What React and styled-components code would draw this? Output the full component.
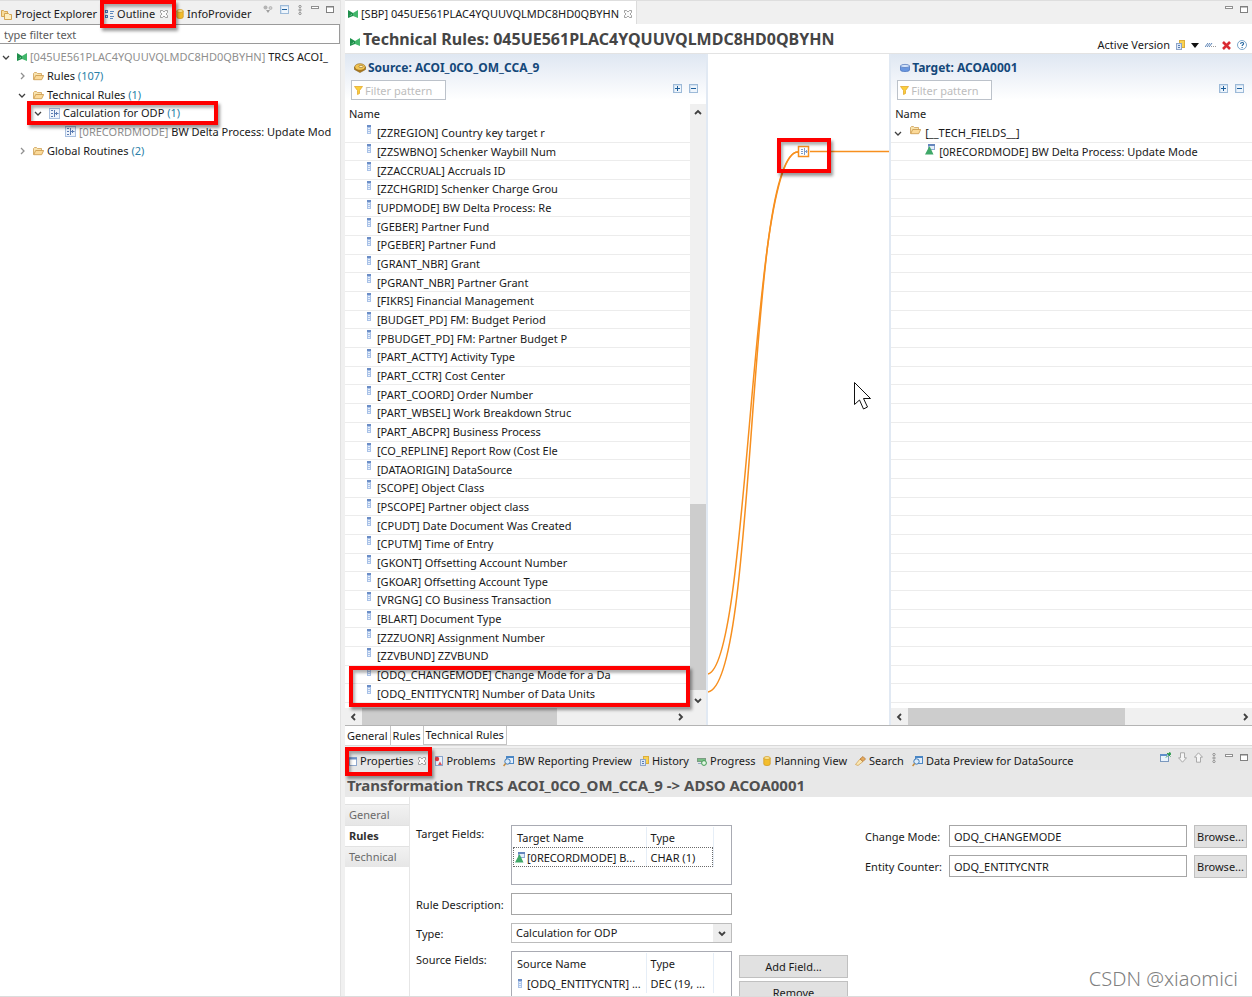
import React from 'react';
import styled, { createGlobalStyle, css } from 'styled-components';

const GlobalStyle = createGlobalStyle`
    * {
        box-sizing: border-box;
    }
    body {
        margin: 0;
        background: #f0f0f0;
        color: #1a1a1a;
        font-family: "Noto Sans", "Open Sans", sans-serif;
        font-size: 11px;
        line-height: 16px;
    }
    button, input, select, table {
        font: inherit;
        color: inherit;
    }
    svg {
        display: block;
        flex: none;
    }
    h1, h2, p, ul {
        margin: 0;
        padding: 0;
    }
`;

/* ---------- icons ---------- */

const TransformIcon = () => (
    <svg width="10" height="10" viewBox="0 0 10 10">
        <path d="M0 1l5 3v3L0 9z" fill="#1f8f4c" />
        <path d="M10 1L5 4v3l5 2z" fill="#43b76c" />
        <path d="M1 7l3-2v1z" fill="#9be0b4" />
    </svg>
);

const FolderIcon = () => (
    <svg width="11" height="10" viewBox="0 0 11 10">
        <path d="M.5 8.500v-6l1-1h2l1 1h4v2" fill="#f8e3ae" stroke="#cf9f55" strokeWidth=".8" />
        <path d="M.7 8.700l2-4.200h8l-2 4.200z" fill="#fbd998" stroke="#c99748" strokeWidth=".8" />
    </svg>
);

const RuleIcon = () => (
    <svg width="11" height="11" viewBox="0 0 11 11">
        <rect x=".5" y=".5" width="10" height="10" fill="#eef4fc" stroke="#a9bfdf" />
        <path d="M2 2.500h2M2 5.500h2M2 8.500h2M5.500 2v7M5.500 5.500h4M7.500 4v3" fill="none" stroke="#5c7db3" />
    </svg>
);

const FieldIcon = () => (
    <svg width="4" height="9" viewBox="0 0 4 9">
        <rect width="4" height="9" fill="#a9c2e8" />
        <rect width="4" height="2" fill="#6b8dc6" />
        <path d="M1 3.500h2M1 5.500h2M1 7.500h2" stroke="#e8f0fb" />
    </svg>
);

const KeyFieldIcon = () => (
    <svg width="10" height="11" viewBox="0 0 10 11">
        <rect x="3.500" y=".5" width="6" height="5" fill="#e4edf9" stroke="#8ea8d2" />
        <path d="M3 1h7" stroke="#6586bd" strokeWidth="2" />
        <path d="M4.500 2L8.500 10.500H0z" fill="#3fa868" />
    </svg>
);

const ExplorerIcon = () => (
    <svg width="11" height="11" viewBox="0 0 11 11">
        <path d="M.5 7.500v-6h2l1 1h3v5z" fill="#f7dc9a" stroke="#d3a552" />
        <path d="M3.500 4.500h4l1 1h2v5h-7z" fill="#fdeebf" stroke="#d3a552" />
    </svg>
);

const OutlineIcon = () => (
    <svg width="9" height="9" viewBox="0 0 9 9">
        <rect x=".5" y=".5" width="2" height="2" fill="#d4e3f6" stroke="#4673b0" />
        <rect x=".5" y="5.500" width="2" height="2" fill="#d4e3f6" stroke="#4673b0" />
        <path d="M5 1.500h4M5 3.500h3M5 6.500h4M5 8.500h3" stroke="#5f88bd" />
    </svg>
);

const CylinderIcon = () => (
    <svg width="8" height="10" viewBox="0 0 8 10">
        <path d="M.8 2v6c0 2 6.400 2 6.400 0V2z" fill="#f3bd2c" stroke="#d39c22" strokeWidth=".8" />
        <ellipse cx="4" cy="2" rx="3.200" ry="1.400" fill="#fce99c" stroke="#d39c22" strokeWidth=".8" />
    </svg>
);

const TargetDiskIcon = () => (
    <svg width="10" height="10" viewBox="0 0 10 10">
        <path d="M.5 3v4c0 2 9 2 9 0V3z" fill="#6a97e0" stroke="#4c76c0" strokeWidth=".8" />
        <ellipse cx="5" cy="3" rx="4.500" ry="1.600" fill="#d5e4fa" stroke="#5a7fc0" strokeWidth=".8" />
    </svg>
);

const SourceIcon = () => (
    <svg width="12" height="10" viewBox="0 0 12 10">
        <path d="M.5 4v2.500L6 9.500l5.500-3V4z" fill="#b8801c" stroke="#7d5a18" strokeWidth=".6" />
        <ellipse cx="6" cy="4" rx="5.300" ry="3.300" fill="#f1c453" stroke="#8a6118" strokeWidth=".6" />
        <ellipse cx="7" cy="3.500" rx="2" ry="1.200" fill="#fff1bc" stroke="#8a6118" strokeWidth=".6" />
    </svg>
);

const CloseIcon = () => (
    <svg width="8" height="8" viewBox="0 0 8 8">
        <path d="M.5.5h2L4 2 5.500.5h2v2L6 4l1.500 1.500v2h-2L4 6 2.500 7.500h-2v-2L2 4 .5 2.500z" fill="#fafafa" stroke="#8c8c8c" strokeWidth=".8" />
    </svg>
);

const FunnelIcon = () => (
    <svg width="9" height="9" viewBox="0 0 9 9">
        <path d="M.5.5h8L5.500 4.500v3l-2 1v-4z" fill="#fbcf3a" stroke="#e3aa30" strokeWidth=".8" />
    </svg>
);

const ExpandIcon = ({ plus }) => (
    <svg width="9" height="9" viewBox="0 0 9 9">
        <rect x=".5" y=".5" width="8" height="8" fill="#eef5fc" stroke="#9dbad8" />
        <path d="M1 1.500h7M1.500 1v7" stroke="#d3e2f1" />
        <path d={plus ? 'M2 4.500h5M4.500 2v5' : 'M2 4.500h5'} stroke="#1d5f9c" />
    </svg>
);

const LinkEditorIcon = () => (
    <svg width="10" height="10" viewBox="0 0 10 10">
        <circle cx="2.500" cy="2.500" r="2" fill="#b4b4b4" />
        <circle cx="7.500" cy="3" r="1.500" fill="#d0d0d0" stroke="#a0a0a0" strokeWidth=".6" />
        <path d="M3 5h4L5 8z" fill="#9f9f9f" />
    </svg>
);

const DotsIcon = () => (
    <svg width="4" height="10" viewBox="0 0 4 10">
        <g fill="#fff" stroke="#777" strokeWidth=".8">
            <circle cx="2" cy="1.500" r="1.100" />
            <circle cx="2" cy="5" r="1.100" />
            <circle cx="2" cy="8.500" r="1.100" />
        </g>
    </svg>
);

const MinimizeIcon = () => (
    <svg width="8" height="8" viewBox="0 0 8 8">
        <rect x=".5" y=".5" width="7" height="2" fill="#fff" stroke="#909090" />
    </svg>
);

const MaximizeIcon = () => (
    <svg width="8" height="8" viewBox="0 0 8 8">
        <rect x=".5" y=".5" width="7" height="6" fill="#fff" stroke="#808080" />
        <path d="M0 1h8" stroke="#808080" />
    </svg>
);

const VersionIcon = () => (
    <svg width="9" height="11" viewBox="0 0 9 11">
        <rect x="3.500" y=".5" width="5" height="7" fill="#f9d253" stroke="#dcae3a" />
        <rect x=".5" y="3.500" width="5" height="6" fill="#dce8f7" stroke="#8ea5c9" />
        <path d="M2 5.500h2M2 7.500h2" stroke="#5c7db0" />
    </svg>
);

const CaretIcon = () => (
    <svg width="8" height="5" viewBox="0 0 8 5">
        <path d="M0 0h8L4 5z" fill="#111" />
    </svg>
);

const StrokesIcon = () => (
    <svg width="11" height="6" viewBox="0 0 11 6">
        <path d="M0 5l3-4M2 5l3-4M4 5l3-4" stroke="#5b83b5" />
        <path d="M6 4.500h1M8 4.500h1M10 4.500h1" stroke="#9a9a9a" />
    </svg>
);

const DeleteIcon = () => (
    <svg width="9" height="9" viewBox="0 0 9 9">
        <path d="M1 1l7 7M8 1L1 8" stroke="#d92b33" strokeWidth="2.600" />
    </svg>
);

const HelpIcon = () => (
    <svg width="10" height="10" viewBox="0 0 10 10">
        <circle cx="5" cy="5" r="4.500" fill="#fff" stroke="#5a8fbd" strokeWidth=".8" />
        <path d="M3.600 4c0-2 3-2 3-.2 0 1-1.500 1-1.500 2.200M5.100 6.900v1" fill="none" stroke="#2567a2" strokeWidth="1.100" />
    </svg>
);

const PropertiesIcon = () => (
    <svg width="8" height="9" viewBox="0 0 8 9">
        <rect x=".5" y=".5" width="7" height="8" fill="#fff" stroke="#8fa8cd" />
        <path d="M0 1.500h8" stroke="#6d90c5" strokeWidth="2" />
    </svg>
);

const ProblemsIcon = () => (
    <svg width="9" height="10" viewBox="0 0 9 10">
        <rect x="1.500" y=".5" width="7" height="9" fill="#eaf1fb" stroke="#8aa5cd" />
        <circle cx="3" cy="3" r="2.200" fill="#dc3b3f" />
        <path d="M4 9l2-3.500L8 9z" fill="#e0525a" />
    </svg>
);

const PreviewIcon = () => (
    <svg width="11" height="11" viewBox="0 0 11 11">
        <rect x="3.500" y=".5" width="7" height="7" fill="#e3eefb" stroke="#4a86c4" />
        <path d="M3 1.500h8" stroke="#4a86c4" />
        <circle cx="4.500" cy="5.500" r="2.700" fill="#dcecfb" stroke="#3b78b6" />
        <path d="M2.600 7.500L.6 10" stroke="#c58b3b" strokeWidth="1.500" />
    </svg>
);

const ProgressIcon = () => (
    <svg width="10" height="9" viewBox="0 0 10 9">
        <rect x=".5" y="1.500" width="8" height="3" fill="#77c084" stroke="#7c9b83" />
        <circle cx="7" cy="6" r="2.400" fill="#e4f6e4" stroke="#3c9a50" />
        <path d="M1 6.500h3" stroke="#8fa8c8" />
    </svg>
);

const SearchIcon = () => (
    <svg width="11" height="10" viewBox="0 0 11 10">
        <path d="M.5 8.500L5 3l3 2.500-5 4z" fill="#fbe7b1" stroke="#d0a35a" strokeWidth=".8" />
        <path d="M5 3l3-2.500 2.500 2.500L8 5.500z" fill="#e3a95c" stroke="#b5793a" strokeWidth=".8" />
    </svg>
);

const PinViewIcon = () => (
    <svg width="11" height="11" viewBox="0 0 11 11">
        <rect x=".5" y="2.500" width="8" height="7" fill="#e9f3fd" stroke="#7b98bd" />
        <path d="M0 3h7" stroke="#5f8fca" strokeWidth="2" />
        <path d="M6 5.500l2-2M7 1l3.500 3.500M8.500 1.500l1.500-1 1 1-1 1.500z" stroke="#2b9a4d" fill="#2b9a4d" />
    </svg>
);

const ArrowIcon = ({ up }) => (
    <svg width="9" height="11" viewBox="0 0 9 11">
        <path
            d={up ? 'M4.500 .8l4 4.400h-2v5h-4v-5h-2z' : 'M4.500 10.200l-4-4.400h2v-5h4v5h2z'}
            fill="#f6f6f6"
            stroke="#a2a2a2"
            strokeWidth=".9"
        />
    </svg>
);

const chevrons = {
    down: 'M1 3l3 3 3-3',
    up: 'M1 6l3-3 3 3',
    right: 'M3 1l3 3-3 3',
    left: 'M6 1L3 4l3 3',
};

const Chevron = ({ dir, color = '#404040', weight = 1.3 }) => (
    <svg width="8" height="8" viewBox="0 0 8 8">
        <path d={chevrons[dir]} fill="none" stroke={color} strokeWidth={weight} />
    </svg>
);

/* ---------- shell ---------- */

const Workbench = styled.div`
    display: grid;
    grid-template-columns: 341px minmax(0, 1fr);
    column-gap: 4px;
    height: 100vh;
    min-height: 700px;
    border-bottom: 1px solid #dcdcdc;
    overflow: hidden;
`;

const Side = styled.aside`
    display: flex;
    flex-direction: column;
    min-width: 0;
    background: #ffffff;
    border-right: 1px solid #e2e2e2;
`;

const Main = styled.main`
    position: relative;
    display: flex;
    flex-direction: column;
    min-width: 0;
    min-height: 0;
`;

const TabBar = styled.div`
    display: flex;
    align-items: center;
    height: ${props => props.height || 24}px;
    flex: none;
    gap: 8px;
    padding: ${props => props.pad || '3px 6px 0 1px'};
    background: ${props => props.shade || '#f0f0f0'};
    border-top: 1px solid #dedede;
    white-space: nowrap;
`;

const Tab = styled.div`
    position: relative;
    display: flex;
    align-items: center;
    gap: 3px;
`;

const TabClose = styled.button`
    padding: 0;
    margin-left: 2px;
    border: 0;
    background: none;
`;

const Tools = styled.div`
    display: flex;
    align-items: center;
    align-self: flex-start;
    gap: 7px;
    margin-left: auto;
`;

const Tool = styled.button`
    display: flex;
    justify-content: center;
    align-items: center;
    min-width: 8px;
    height: 11px;
    padding: 0;
    border: 0;
    background: none;
`;

const Marker = styled.div`
    position: absolute;
    z-index: 3;
    top: ${props => props.top};
    bottom: ${props => props.bottom};
    left: ${props => props.left};
    right: ${props => props.right};
    width: ${props => props.width};
    height: ${props => props.height};
    border: 4px solid #fe0000;
    box-shadow: 2px 3px 3px rgba(0, 0, 0, 0.4), inset 2px 3px 3px rgba(0, 0, 0, 0.3);
    pointer-events: none;
`;

/* ---------- outline tree ---------- */

const OutlineFilter = styled.input`
    height: 20px;
    flex: none;
    padding: 0 4px;
    border: 1px solid #9a9a9a;
    border-left: 0;
    background: #ffffff;
    outline: none;
    &::placeholder {
        color: #5a5a5a;
        opacity: 1;
    }
`;

const Tree = styled.ul`
    position: relative;
    display: grid;
    grid-auto-rows: 1fr;
    height: 112px;
    margin-top: 4px;
    list-style: none;
`;

const TreeItem = styled.li`
    display: flex;
    align-items: center;
    gap: 3px;
    padding-left: ${props => 2 + props.depth * 16}px;
    white-space: nowrap;
    overflow: hidden;
`;

const Twisty = styled.span`
    width: 8px;
    height: 8px;
    margin-right: 4px;
    flex: none;
`;

const Key = styled.span`
    color: #8f8f8f;
`;

const Count = styled.span`
    color: #2a7fa8;
`;

/* ---------- editor ---------- */

const Editor = styled.section`
    display: flex;
    flex-direction: column;
    flex: 1;
    min-height: 0;
    background: #ffffff;
`;

const EditorTab = styled(Tab)`
    height: 23px;
    padding: 3px 4px 0 3px;
    background: #ffffff;
    border-right: 1px solid #dcdcdc;
`;

const EditorTools = styled(Tools)`
    padding-top: 3px;
`;

const EditorHeader = styled.header`
    display: flex;
    align-items: center;
    gap: 3px;
    height: 30px;
    flex: none;
    padding: 0 5px;
    border-bottom: 1px solid #e3e3e3;
    white-space: nowrap;
    & > svg {
        margin-top: 6px;
    }
`;

const EditorTitle = styled.h1`
    font-size: 16px;
    line-height: 20px;
    font-weight: bold;
    color: #454545;
`;

const VersionTools = styled.div`
    display: flex;
    align-items: center;
    align-self: flex-end;
    gap: 6px;
    margin-left: auto;
`;

const Mapping = styled.div`
    display: grid;
    grid-template-columns: 2fr 1fr 2fr;
    grid-template-rows: minmax(0, 1fr);
    flex: 1;
    min-height: 0;
`;

const Pane = styled.section`
    position: relative;
    display: flex;
    flex-direction: column;
    min-width: 0;
    min-height: 0;
    border: 0 solid #e1e9f3;
    border-width: ${props => props.edge};
`;

const PaneHead = styled.div`
    height: 50px;
    flex: none;
    padding: 4px 8px 0 6px;
    background: linear-gradient(#dfe7f2, #ffffff 46px);
`;

const PaneTitle = styled.h2`
    display: flex;
    align-items: center;
    gap: 2px;
    margin-bottom: 2px;
    padding-left: 3px;
    font-size: 12px;
    line-height: 20px;
    font-weight: bold;
    color: #14487a;
    white-space: nowrap;
`;

const PaneControls = styled.div`
    display: flex;
`;

const PaneTools = styled(Tools)`
    padding-top: 3px;
`;

const FilterBox = styled.label`
    display: flex;
    align-items: center;
    gap: 2px;
    width: 95px;
    height: 20px;
    padding: 0 2px;
    border: 1px solid #bcc2ca;
    background: #ffffff;
`;

const FilterInput = styled.input`
    min-width: 0;
    width: 100%;
    padding: 2px 0 0;
    border: 0;
    outline: none;
    background: none;
    &::placeholder {
        color: #bdbdbd;
        opacity: 1;
    }
`;

const PaneBody = styled.div`
    display: grid;
    grid-template-columns: minmax(0, 1fr) ${props => (props.scroll ? '16px' : '')};
    grid-template-rows: minmax(0, 1fr) 17px;
    flex: 1;
    min-height: 0;
`;

const FieldTree = styled.div`
    display: flex;
    flex-direction: column;
    min-height: 0;
    padding-bottom: 5px;
`;

const ColumnName = styled.div`
    height: 20px;
    flex: none;
    padding: 2px 4px;
`;

const FieldList = styled.ul`
    display: grid;
    grid-auto-rows: minmax(0, 1fr);
    flex: 1;
    min-height: 0;
    list-style: none;
`;

const FieldRow = styled.li`
    display: flex;
    align-items: center;
    gap: 4px;
    padding-top: 1px;
    padding-left: ${props => props.indent}px;
    border-bottom: 1px solid #ececec;
    white-space: nowrap;
    overflow: hidden;
`;

const RaisedIcon = styled.span`
    min-width: 6px;
    align-self: flex-start;
`;

const ScrollV = styled.div`
    display: flex;
    flex-direction: column;
    align-items: center;
    justify-content: space-between;
    padding: 4px 0;
    background: #f0f0f0;
`;

const ThumbV = styled.div`
    width: 100%;
    height: 186px;
    margin: auto 0 6px;
    background: #cdcdcd;
`;

const ScrollH = styled.div`
    display: flex;
    align-items: center;
    gap: 5px;
    grid-column: 1 / -1;
    padding: 0 ${props => props.end}px 0 4px;
    background: #f0f0f0;
`;

const ThumbH = styled.div`
    width: ${props => props.share};
    height: 100%;
    margin-right: auto;
    background: #cdcdcd;
`;

const Canvas = styled.div`
    position: relative;
    overflow: hidden;
    & > svg {
        position: absolute;
        top: 0;
        left: 0;
        overflow: visible;
    }
`;

const PageTabs = styled.nav`
    display: flex;
    height: 20px;
    flex: none;
    border-top: 1px solid #b4b4b4;
`;

const PageTab = styled.button`
    padding: 0 2px;
    border: 0;
    border-right: 1px solid #c4c4c4;
    background: #ffffff;
    line-height: 18px;
    ${props => props.active && css`
        border-bottom: 1px solid #c4c4c4;
    `}
`;

/* ---------- properties ---------- */

const Properties = styled.section`
    position: relative;
    display: flex;
    flex-direction: column;
    flex: none;
    height: 251px;
    padding-top: 2px;
    border-top: 1px solid #d8d8d8;
`;

const PropertiesTitle = styled.h2`
    flex: none;
    height: 27px;
    padding: 3px 2px 0;
    background: #e8e8e8;
    font-size: 15px;
    line-height: 24px;
    color: #505050;
    white-space: nowrap;
`;

const PropertiesBody = styled.div`
    display: flex;
    align-items: stretch;
    flex: 1;
    min-height: 0;
    background: #ffffff;
    overflow: hidden;
`;

const Sections = styled.div`
    width: 65px;
    flex: none;
    padding-top: 7px;
    border-right: 1px solid #e6e6e6;
`;

const Section = styled.button`
    display: block;
    width: 100%;
    height: 21px;
    padding: 0 4px;
    border: 0;
    border-top: 1px solid #e2e2e2;
    background: linear-gradient(#f2f2f2, #e6e6e6);
    color: #6a6a6a;
    text-align: left;
    ${props => props.active && css`
        background: #ffffff;
        color: #303030;
        font-weight: bold;
    `}
`;

const Form = styled.div`
    display: grid;
    grid-template-columns: 95px 221px 109px;
    grid-template-rows: 60px 22px 20px 70px;
    row-gap: 8px;
    flex: none;
    padding: 28px 0 0 6px;
`;

const Label = styled.label`
    align-self: ${props => (props.top ? 'start' : 'center')};
    padding-top: 1px;
    white-space: nowrap;
`;

const TextField = styled.input`
    min-width: 0;
    height: 22px;
    padding: 0 4px;
    border: 1px solid #a6a6a6;
    border-radius: 0;
    background: #ffffff;
    outline: none;
`;

const SelectWrap = styled.div`
    position: relative;
    grid-column: 2;
    & > span {
        position: absolute;
        top: 1px;
        right: 1px;
        display: flex;
        align-items: center;
        justify-content: center;
        width: 18px;
        height: 18px;
        background: #ededed;
        pointer-events: none;
    }
`;

const Select = styled.select`
    width: 100%;
    height: 20px;
    padding: 0 4px;
    border: 1px solid #bcbcbc;
    border-radius: 0;
    background: #ffffff;
    appearance: none;
`;

const TableBox = styled.div`
    height: ${props => props.height}px;
    padding: 1px;
    border: 1px solid #a9abb3;
    overflow: hidden;
`;

const FieldTable = styled.table`
    width: 200px;
    table-layout: fixed;
    border-collapse: collapse;
    th, td {
        height: 20px;
        padding: 1px 4px 0;
        border-right: 1px solid #e6eef7;
        font-weight: normal;
        text-align: left;
        white-space: nowrap;
        overflow: hidden;
    }
    td:first-child {
        padding: 1px 1px 0 2px;
    }
    tbody tr {
        outline: ${props => (props.focused ? '1px dotted #6a6a6a' : 'none')};
        outline-offset: -1px;
    }
`;

const CellContent = styled.span`
    display: flex;
    align-items: center;
    gap: 2px;
    & > span {
        width: 10px;
        display: flex;
        justify-content: center;
        flex: none;
    }
`;

const FieldButtons = styled.div`
    display: flex;
    flex-direction: column;
    gap: 3px;
    padding: 4px 0 0 7px;
    margin-right: -7px;
`;

const Button = styled.button`
    height: 23px;
    padding: 0;
    border: 1px solid #c0c0c0;
    background: #e1e1e1;
`;

const OdpForm = styled.div`
    display: grid;
    grid-template-columns: 77px minmax(0, 1fr) 53px;
    grid-auto-rows: 22px;
    gap: 8px 7px;
    flex: 1;
    min-width: 0;
    padding: 28px 5px 0 24px;
`;

const Watermark = styled.div`
    position: absolute;
    right: 14px;
    bottom: 4px;
    font-size: 20px;
    line-height: 26px;
    font-weight: 300;
    color: #808080;
    text-shadow: 1px 1px 0 #ffffff;
`;

/* ---------- data ---------- */

const sourceFields = [
    '[ZZREGION] Country key target r',
    '[ZZSWBNO] Schenker Waybill Num',
    '[ZZACCRUAL] Accruals ID',
    '[ZZCHGRID] Schenker Charge Grou',
    '[UPDMODE] BW Delta Process: Re',
    '[GEBER] Partner Fund',
    '[PGEBER] Partner Fund',
    '[GRANT_NBR] Grant',
    '[PGRANT_NBR] Partner Grant',
    '[FIKRS] Financial Management',
    '[BUDGET_PD] FM: Budget Period',
    '[PBUDGET_PD] FM: Partner Budget P',
    '[PART_ACTTY] Activity Type',
    '[PART_CCTR] Cost Center',
    '[PART_COORD] Order Number',
    '[PART_WBSEL] Work Breakdown Struc',
    '[PART_ABCPR] Business Process',
    '[CO_REPLINE] Report Row (Cost Ele',
    '[DATAORIGIN] DataSource',
    '[SCOPE] Object Class',
    '[PSCOPE] Partner object class',
    '[CPUDT] Date Document Was Created',
    '[CPUTM] Time of Entry',
    '[GKONT] Offsetting Account Number',
    '[GKOAR] Offsetting Account Type',
    '[VRGNG] CO Business Transaction',
    '[BLART] Document Type',
    '[ZZZUONR] Assignment Number',
    '[ZZVBUND] ZZVBUND',
    '[ODQ_CHANGEMODE] Change Mode for a Da',
    '[ODQ_ENTITYCNTR] Number of Data Units',
];

const emptyRows = Array.from({ length: sourceFields.length - 2 }, (_, i) => i);

const outline = [
    { depth: 0, dir: 'down', icon: <TransformIcon />, code: '[045UE561PLAC4YQUUVQLMDC8HD0QBYHN]', text: 'TRCS ACOI_' },
    { depth: 1, dir: 'right', icon: <FolderIcon />, text: 'Rules', count: 107 },
    { depth: 1, dir: 'down', icon: <FolderIcon />, text: 'Technical Rules', count: 1 },
    { depth: 2, dir: 'down', icon: <RuleIcon />, text: 'Calculation for ODP', count: 1 },
    { depth: 3, icon: <RuleIcon />, code: '[0RECORDMODE]', text: 'BW Delta Process: Update Mod' },
    { depth: 1, dir: 'right', icon: <FolderIcon />, text: 'Global Routines', count: 2 },
];

/* ---------- parts ---------- */

const OutlineView = () => (
    <Side>
        <TabBar>
            <Tab><ExplorerIcon />Project Explorer</Tab>
            <Tab>
                <OutlineIcon />Outline
                <TabClose aria-label="Close Outline"><CloseIcon /></TabClose>
                <Marker top="-6px" left="-5px" right="-8px" bottom="-6px" />
            </Tab>
            <Tab><CylinderIcon />InfoProvider</Tab>
            <Tools>
                <Tool aria-label="Link with editor"><LinkEditorIcon /></Tool>
                <Tool aria-label="Collapse all"><ExpandIcon /></Tool>
                <Tool aria-label="View menu"><DotsIcon /></Tool>
                <Tool aria-label="Minimize"><MinimizeIcon /></Tool>
                <Tool aria-label="Maximize"><MaximizeIcon /></Tool>
            </Tools>
        </TabBar>
        <OutlineFilter placeholder="type filter text" aria-label="Filter outline" />
        <Tree>
            {outline.map(item => (
                <TreeItem key={item.text} depth={item.depth}>
                    <Twisty>
                        {item.dir && <Chevron dir={item.dir} color={item.dir === 'right' ? '#909090' : '#404040'} />}
                    </Twisty>
                    {item.icon}
                    <span>
                        {item.code && <Key>{item.code} </Key>}
                        {item.text}
                        {item.count && <Count> ({item.count})</Count>}
                    </span>
                </TreeItem>
            ))}
            <Marker top="53px" left="27px" width="191px" height="24px" />
        </Tree>
    </Side>
);

const MappingPaneHead = ({ icon, title }) => (
    <PaneHead>
        <PaneTitle>{icon}{title}</PaneTitle>
        <PaneControls>
            <FilterBox>
                <FunnelIcon />
                <FilterInput placeholder="Filter pattern" aria-label={`${title} filter`} />
            </FilterBox>
            <PaneTools>
                <Tool aria-label="Expand all"><ExpandIcon plus /></Tool>
                <Tool aria-label="Collapse all"><ExpandIcon /></Tool>
            </PaneTools>
        </PaneControls>
    </PaneHead>
);

const SourcePane = () => (
    <Pane edge="0 2px 0 0">
        <MappingPaneHead icon={<SourceIcon />} title="Source: ACOI_0CO_OM_CCA_9" />
        <PaneBody scroll>
            <FieldTree>
                <ColumnName>Name</ColumnName>
                <FieldList>
                    {sourceFields.map(field => (
                        <FieldRow key={field} indent={22}>
                            <RaisedIcon><FieldIcon /></RaisedIcon>
                            {field}
                        </FieldRow>
                    ))}
                </FieldList>
            </FieldTree>
            <ScrollV>
                <Chevron dir="up" weight={1.8} />
                <ThumbV />
                <Chevron dir="down" weight={1.8} />
            </ScrollV>
            <ScrollH end={22}>
                <Chevron dir="left" weight={1.8} />
                <ThumbH share="195px" />
                <Chevron dir="right" weight={1.8} />
            </ScrollH>
        </PaneBody>
        <Marker left="4px" right="16px" bottom="18px" height="41px" />
    </Pane>
);

const RuleCanvas = () => (
    <Canvas>
        <svg width="182" height="671" viewBox="0 0 182 671">
            <g fill="none" stroke="#f78f1e" strokeWidth="1.500">
                <path d="M0 620C42 610 42 98 90 98" />
                <path d="M0 638C50 630 38 98 90 98" />
                <path d="M102 97.500h2000" />
                <rect x="90.500" y="92.500" width="10" height="10" fill="#fff" />
            </g>
            <path d="M93 95.500h2M93 97.500h2M93 99.500h2M96.500 94v7M96.500 97.500h3M98.500 96v3" fill="none" stroke="#7f9cca" />
            <path d="M146.500 328.500v22l5-4.500 4 9 4-2-4-8.500h7z" fill="#fff" stroke="#111" />
        </svg>
        <Marker top="84px" left="69px" width="54px" height="35px" />
    </Canvas>
);

const TargetPane = () => (
    <Pane edge="0 0 0 2px">
        <MappingPaneHead icon={<TargetDiskIcon />} title="Target: ACOA0001" />
        <PaneBody>
            <FieldTree>
                <ColumnName>Name</ColumnName>
                <FieldList>
                    <FieldRow indent={3}>
                        <Twisty><Chevron dir="down" /></Twisty>
                        <RaisedIcon><FolderIcon /></RaisedIcon>
                        [__TECH_FIELDS__]
                    </FieldRow>
                    <FieldRow indent={34}>
                        <RaisedIcon><KeyFieldIcon /></RaisedIcon>
                        [0RECORDMODE] BW Delta Process: Update Mode
                    </FieldRow>
                    {emptyRows.map(row => <FieldRow key={row} />)}
                </FieldList>
            </FieldTree>
            <ScrollH end={3}>
                <Chevron dir="left" weight={1.8} />
                <ThumbH share="217px" />
                <Chevron dir="right" weight={1.8} />
            </ScrollH>
        </PaneBody>
    </Pane>
);

const RulesEditor = () => (
    <Editor>
        <TabBar pad="0 4px 0 0">
            <EditorTab>
                <TransformIcon />[SBP] 045UE561PLAC4YQUUVQLMDC8HD0QBYHN
                <TabClose aria-label="Close editor"><CloseIcon /></TabClose>
            </EditorTab>
            <EditorTools>
                <Tool aria-label="Minimize"><MinimizeIcon /></Tool>
                <Tool aria-label="Maximize"><MaximizeIcon /></Tool>
            </EditorTools>
        </TabBar>
        <EditorHeader>
            <TransformIcon />
            <EditorTitle>Technical Rules: 045UE561PLAC4YQUUVQLMDC8HD0QBYHN</EditorTitle>
            <VersionTools>
                Active Version
                <Tool aria-label="Versions"><VersionIcon /></Tool>
                <Tool aria-label="Choose version"><CaretIcon /></Tool>
                <Tool aria-label="Hide lines"><StrokesIcon /></Tool>
                <Tool aria-label="Delete"><DeleteIcon /></Tool>
                <Tool aria-label="Help"><HelpIcon /></Tool>
            </VersionTools>
        </EditorHeader>
        <Mapping>
            <SourcePane />
            <RuleCanvas />
            <TargetPane />
        </Mapping>
        <PageTabs>
            <PageTab>General</PageTab>
            <PageTab>Rules</PageTab>
            <PageTab active>Technical Rules</PageTab>
        </PageTabs>
    </Editor>
);

const PropertiesView = () => (
    <Properties>
        <TabBar height={22} pad="3px 4px 0 4px" shade="#e6e6e6">
            <Tab>
                <PropertiesIcon />Properties
                <TabClose aria-label="Close Properties"><CloseIcon /></TabClose>
                <Marker top="-6px" left="-4px" right="-6px" bottom="-7px" />
            </Tab>
            <Tab><ProblemsIcon />Problems</Tab>
            <Tab><PreviewIcon />BW Reporting Preview</Tab>
            <Tab><VersionIcon />History</Tab>
            <Tab><ProgressIcon />Progress</Tab>
            <Tab><CylinderIcon />Planning View</Tab>
            <Tab><SearchIcon />Search</Tab>
            <Tab><PreviewIcon />Data Preview for DataSource</Tab>
            <Tools>
                <Tool aria-label="Pin view"><PinViewIcon /></Tool>
                <Tool aria-label="Next"><ArrowIcon /></Tool>
                <Tool aria-label="Previous"><ArrowIcon up /></Tool>
                <Tool aria-label="View menu"><DotsIcon /></Tool>
                <Tool aria-label="Minimize"><MinimizeIcon /></Tool>
                <Tool aria-label="Maximize"><MaximizeIcon /></Tool>
            </Tools>
        </TabBar>
        <PropertiesTitle>Transformation TRCS ACOI_0CO_OM_CCA_9 -&gt; ADSO ACOA0001</PropertiesTitle>
        <PropertiesBody>
            <Sections>
                <Section>General</Section>
                <Section active>Rules</Section>
                <Section>Technical</Section>
            </Sections>
            <Form>
                <Label as="span" top>Target Fields:</Label>
                <TableBox height={60}>
                    <FieldTable focused aria-label="Target Fields">
                        <colgroup><col width="133" /><col width="67" /></colgroup>
                        <thead><tr><th>Target Name</th><th>Type</th></tr></thead>
                        <tbody>
                            <tr>
                                <td><CellContent><span><KeyFieldIcon /></span>[0RECORDMODE] B...</CellContent></td>
                                <td>CHAR (1)</td>
                            </tr>
                        </tbody>
                    </FieldTable>
                </TableBox>
                <span />
                <Label htmlFor="description">Rule Description:</Label>
                <TextField id="description" />
                <span />
                <Label htmlFor="type">Type:</Label>
                <SelectWrap>
                    <Select id="type"><option>Calculation for ODP</option></Select>
                    <span><Chevron dir="down" weight={1.8} /></span>
                </SelectWrap>
                <span />
                <Label as="span" top>Source Fields:</Label>
                <TableBox height={70}>
                    <FieldTable aria-label="Source Fields">
                        <colgroup><col width="133" /><col width="67" /></colgroup>
                        <thead><tr><th>Source Name</th><th>Type</th></tr></thead>
                        <tbody>
                            <tr>
                                <td><CellContent><span><FieldIcon /></span>[ODQ_ENTITYCNTR] ...</CellContent></td>
                                <td>DEC (19, ...</td>
                            </tr>
                        </tbody>
                    </FieldTable>
                </TableBox>
                <FieldButtons>
                    <Button>Add Field...</Button>
                    <Button>Remove</Button>
                </FieldButtons>
            </Form>
            <OdpForm>
                <Label htmlFor="change-mode">Change Mode:</Label>
                <TextField id="change-mode" defaultValue="ODQ_CHANGEMODE" />
                <Button>Browse...</Button>
                <Label htmlFor="entity-counter">Entity Counter:</Label>
                <TextField id="entity-counter" defaultValue="ODQ_ENTITYCNTR" />
                <Button>Browse...</Button>
            </OdpForm>
        </PropertiesBody>
        <Watermark>CSDN @xiaomici</Watermark>
    </Properties>
);

const App = () => {
    return (
        <>
            <GlobalStyle />
            <Workbench>
                <OutlineView />
                <Main>
                    <RulesEditor />
                    <PropertiesView />
                </Main>
            </Workbench>
        </>
    );
};

export default App;
